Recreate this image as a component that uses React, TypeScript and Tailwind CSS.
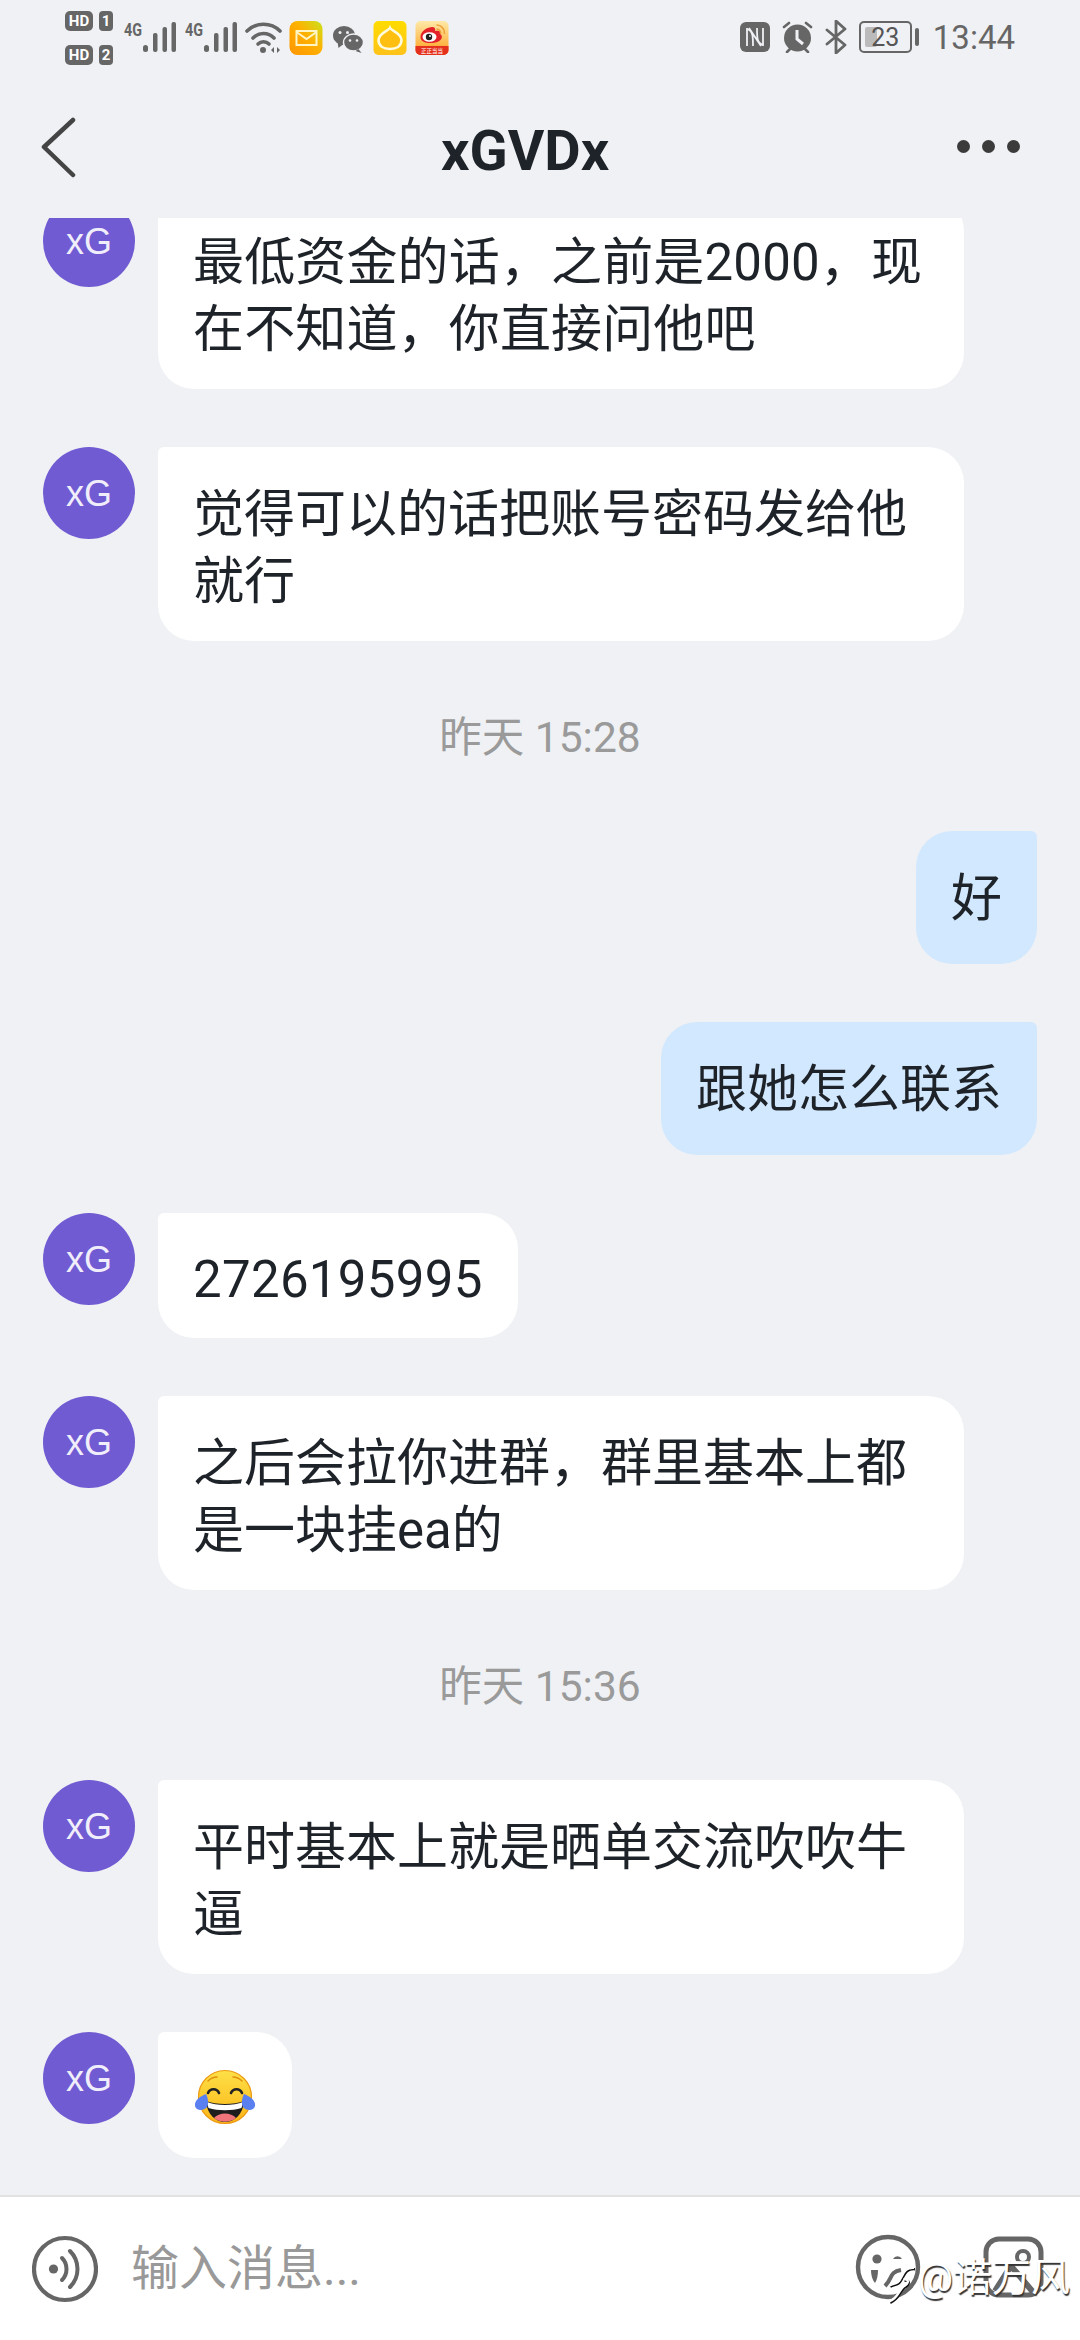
import React from "react";

const fontStack = { fontFamily: 'Roboto, "Noto Sans CJK SC", sans-serif' };

function Avatar() {
  return (
    <div className="w-[92px] h-[92px] shrink-0 rounded-full bg-[#705bd2] flex items-center justify-center pt-[2px] text-[36px] text-[#f1eefb] font-['Liberation_Sans',sans-serif]">
      xG
    </div>
  );
}

function Left({ children, cls }: { children: React.ReactNode; cls: string }) {
  return (
    <div className="flex items-start pl-[43px] gap-[23px]">
      <Avatar />
      <div className={`bg-white rounded-[36px] rounded-tl-[6px] px-[35px] text-[51px] leading-[67px] text-[#1e2329] ${cls}`}>{children}</div>
    </div>
  );
}

function Right({ children }: { children: React.ReactNode }) {
  return (
    <div className="flex justify-end pr-[43px]">
      <div className="bg-[#d2e8fe] rounded-[36px] rounded-tr-[6px] px-[35px] pt-[34px] pb-[32px] text-[51px] leading-[67px] text-[#1e2329]">{children}</div>
    </div>
  );
}

function Time({ children }: { children: React.ReactNode }) {
  return <div className="h-[74px] flex items-center justify-center text-[42.5px] text-[#9a9a9a] pt-[4px]">{children}</div>;
}

function Signal() {
  return (
    <svg width="52" height="34" viewBox="0 0 52 34" className="shrink-0">
      <text x="0" y="15" fontSize="19" fontWeight="700" fill="#666" fontFamily="Roboto" textLength="18" lengthAdjust="spacingAndGlyphs">4G</text>
      <g fill="#666">
        <rect x="19" y="24" width="5" height="7" rx="2.5" />
        <rect x="29" y="12" width="4.5" height="19" rx="2" />
        <rect x="38.5" y="6" width="4.5" height="25" rx="2" />
        <rect x="47.5" y="1" width="4.5" height="30" rx="2" />
      </g>
    </svg>
  );
}

function StatusBar() {
  return (
    <div className="h-[66px] flex items-center pl-[65px] pr-[65px] text-[#666]">
      <div className="w-[48px] shrink-0 flex flex-col gap-[14px] text-white font-bold font-['Roboto',sans-serif] mt-[10px]">
        <div className="flex justify-between h-[20px]">
          <span className="w-[28px] rounded-[5px] bg-[#666] text-[15px] leading-[20px] text-center">HD</span>
          <span className="w-[14px] rounded-[4px] bg-[#666] text-[15px] leading-[20px] text-center">1</span>
        </div>
        <div className="flex justify-between h-[20px]">
          <span className="w-[28px] rounded-[5px] bg-[#666] text-[15px] leading-[20px] text-center">HD</span>
          <span className="w-[14px] rounded-[4px] bg-[#666] text-[15px] leading-[20px] text-center">2</span>
        </div>
      </div>
      <div className="flex items-center ml-[11px] gap-[9px] mt-[10px]">
        <Signal />
        <Signal />
      </div>
      <svg width="38" height="34" viewBox="0 0 38 34" className="ml-[8px] mt-[10px] shrink-0">
        <g fill="none" stroke="#666" strokeWidth="3.6" strokeLinecap="round">
          <path d="M2 10 C11 1 26 1 35 10" />
          <path d="M8 17 C14 11 23 11 29 17" />
          <path d="M13 23 C16 20 21 20 24 23" />
        </g>
        <circle cx="18" cy="29" r="3" fill="#666" />
        <path d="M26 29l3-3v6zM32 26l3 3-3 3z" fill="#666" />
      </svg>
      <svg width="34" height="34" viewBox="0 0 33 34" className="ml-[6px] mt-[10px] shrink-0">
        <defs>
          <linearGradient id="mailg" x1="0" y1="1" x2="1" y2="0">
            <stop offset="0" stopColor="#ff9500" />
            <stop offset="0.55" stopColor="#ffb000" />
            <stop offset="1" stopColor="#c9e31d" />
          </linearGradient>
        </defs>
        <rect width="33" height="34" rx="8" fill="url(#mailg)" />
        <rect x="7" y="10" width="20" height="14" fill="none" stroke="#fff6c8" strokeWidth="2" />
        <path d="M7 11l10 7 10-7" fill="none" stroke="#fff6c8" strokeWidth="2" />
      </svg>
      <svg width="32" height="28" viewBox="0 0 31 28" className="ml-[9px] mt-[11px] shrink-0">
        <ellipse cx="11.5" cy="10.5" rx="11" ry="9.5" fill="#666" />
        <path d="M5 17l1 6 5-4z" fill="#666" />
        <ellipse cx="21" cy="17.5" rx="10" ry="8.5" stroke="#eff1f4" strokeWidth="1.4" fill="#666" />
        <path d="M26 24l3 4-6-2z" fill="#666" />
        <circle cx="7.5" cy="7.5" r="1.5" fill="#eff1f4" />
        <circle cx="15" cy="7.5" r="1.5" fill="#eff1f4" />
        <circle cx="17.5" cy="15.5" r="1.3" fill="#eff1f4" />
        <circle cx="24.5" cy="15.5" r="1.3" fill="#eff1f4" />
      </svg>
      <svg width="34" height="34" viewBox="0 0 33 34" className="ml-[9px] mt-[10px] shrink-0">
        <defs>
          <linearGradient id="yelg" x1="0" y1="0" x2="0" y2="1">
            <stop offset="0" stopColor="#ffdc00" />
            <stop offset="1" stopColor="#ffc21a" />
          </linearGradient>
        </defs>
        <rect width="33" height="34" rx="5" fill="url(#yelg)" />
        <path d="M16.5 7 C18 10 28 12 28 19 C28 25 23 28 16.5 28 C10 28 5 25 5 19 C5 12 15 10 16.5 7 Z" fill="#ffbf10" stroke="#fffbe0" strokeWidth="2.6" />
      </svg>
      <svg width="34" height="34" viewBox="0 0 33 34" className="ml-[8px] mt-[10px] shrink-0">
        <defs>
          <linearGradient id="wbg" x1="0" y1="0" x2="0" y2="1">
            <stop offset="0" stopColor="#ffe9a8" />
            <stop offset="0.7" stopColor="#ffb545" />
            <stop offset="1" stopColor="#f0501e" />
          </linearGradient>
        </defs>
        <rect width="33" height="34" rx="5" fill="url(#wbg)" />
        <path d="M0 25h33v4a5 5 0 0 1-5 5H5a5 5 0 0 1-5-5z" fill="#e5301c" />
        <path d="M5 16 C5 10 12 6 17 6 C20 6 20 9 19.5 10 C23 9 26 10 25 13.5 C28 15 27 22 15 22 C9 22 5 20 5 16 Z" fill="#e3222a" />
        <ellipse cx="14" cy="16" rx="7" ry="4.8" fill="#fff" />
        <circle cx="13.5" cy="16" r="3.2" fill="#222" />
        <circle cx="14.5" cy="15" r="1" fill="#fff" />
        <path d="M21 4a8 8 0 0 1 8 9M21 8a4 4 0 0 1 4 5" fill="none" stroke="#eda13b" strokeWidth="1.6" />
        <text x="16.5" y="32" textAnchor="middle" fontSize="5.5" fill="#fff" fontFamily="Noto Sans CJK SC">正正当当</text>
      </svg>

      <div className="ml-auto flex items-center mt-[8px]">
        <svg width="30" height="30" viewBox="0 0 30 30" className="shrink-0">
          <rect width="30" height="30" rx="6" fill="#666" />
          <path d="M7 6 V24 M7 7 C13 9 13 14 13 24 M23 24 V6 M23 23 C17 21 17 16 17 6 M9 6 L21 24" fill="none" stroke="#eff1f4" strokeWidth="1.8" />
        </svg>
        <svg width="33" height="32" viewBox="0 0 33 32" className="ml-[11px] shrink-0">
          <circle cx="16.5" cy="17" r="13.5" fill="#666" />
          <path d="M3 6l5-4M30 6l-5-4M6 31l3-3M27 31l-3-3" stroke="#666" strokeWidth="2.6" strokeLinecap="round" />
          <path d="M16 9v9l6 5" fill="none" stroke="#eff1f4" strokeWidth="3" />
        </svg>
        <svg width="22" height="34" viewBox="0 0 22 34" className="ml-[11px] shrink-0">
          <path d="M2 24 L20 9 L11 1 V33 L20 25 L2 10" fill="none" stroke="#666" strokeWidth="2.8" strokeLinejoin="round" strokeLinecap="round" />
        </svg>
        <div className="ml-[12px] relative w-[53px] h-[32px] rounded-[5px] border-[2.5px] border-[#666] shrink-0 flex items-center justify-center text-[25px] leading-none text-[#555]">
          <div className="absolute left-[4px] top-[4px] bottom-[4px] w-[12px] rounded-[2px] bg-[#bbbbbb]" />
          <span className="relative">23</span>
        </div>
        <div className="ml-[3px] w-[4px] h-[18px] rounded-[2px] bg-[#666] shrink-0" />
        <div className="ml-[14px] text-[33px] leading-none text-[#666]">13:44</div>
      </div>
    </div>
  );
}

function Emoji() {
  return (
    <svg width="62" height="56" viewBox="0 0 62 56">
      <defs>
        <linearGradient id="emf" x1="0" y1="0" x2="0" y2="1">
          <stop offset="0" stopColor="#fde047" />
          <stop offset="1" stopColor="#fbb516" />
        </linearGradient>
      </defs>
      <circle cx="31" cy="28" r="26.5" fill="url(#emf)" stroke="#ec9a12" strokeWidth="1.2" />
      <path d="M14 12c3-3 6-4 9-4M48 12c-3-3-6-4-9-4" fill="none" stroke="#e2900f" strokeWidth="1.6" strokeLinecap="round" />
      <path d="M14 24c2-5 9-5 11 0M37 24c2-5 9-5 11 0" fill="none" stroke="#222" strokeWidth="2.6" strokeLinecap="round" />
      <path d="M12 32 C22 36 40 36 50 32 C49 46 40 53 31 53 C22 53 13 46 12 32 Z" fill="#1d1d1d" />
      <path d="M13 33 C22 37 40 37 49 33 L47.5 39 C38 42 24 42 14.5 39 Z" fill="#fff" />
      <path d="M20 49 C25 43 37 43 42 49 C36 54 26 54 20 49 Z" fill="#f0757a" />
      <path d="M12 25 C7 27 0 31 1 37 C2 42 10 42 13 38 C15 35 14 29 12 25 Z" fill="#5a7ff0" />
      <path d="M50 25 C55 27 62 31 61 37 C60 42 52 42 49 38 C47 35 48 29 50 25 Z" fill="#5a7ff0" />
    </svg>
  );
}

export default function App() {
  return (
    <div lang="zh-CN" style={fontStack} className="relative w-[1080px] h-[2340px] bg-[#eff1f4] flex flex-col overflow-hidden">
      <StatusBar />
      <div className="h-[152px] shrink-0 flex items-start pl-[41px] pr-[60px]">
        <svg width="36" height="62" viewBox="0 0 36 62" className="mt-[51px] shrink-0">
          <path d="M32 3 L3 30 L32 58" fill="none" stroke="#444" strokeWidth="4.5" strokeLinecap="round" strokeLinejoin="round" />
        </svg>
        <div className="ml-[364px] mt-[55px] text-[56px] leading-[60px] font-bold text-[#1e2329]">xGVDx</div>
        <div className="ml-auto mt-[74px] flex items-center gap-[12px]">
          <span className="w-[13px] h-[13px] rounded-full bg-[#3b3b3b]" />
          <span className="w-[13px] h-[13px] rounded-full bg-[#3b3b3b]" />
          <span className="w-[13px] h-[13px] rounded-full bg-[#3b3b3b]" />
        </div>
      </div>

      <div className="flex-1 overflow-hidden">
        <div className="-mt-[23px] flex flex-col gap-[58px]">
          <Left cls="w-[806px] pt-[34px] pb-[26px] tracking-[0.15px]">最低资金的话，之前是2000，现在不知道，你直接问他吧</Left>
          <Left cls="w-[806px] pt-[34px] pb-[26px]">觉得可以的话把账号密码发给他就行</Left>
          <Time>昨天 15:28</Time>
          <Right>好</Right>
          <Right>跟她怎么联系</Right>
          <Left cls="pt-[33px] pb-[25px] tracking-[0.3px]">2726195995</Left>
          <Left cls="w-[806px] pt-[34px] pb-[26px]">之后会拉你进群，群里基本上都是一块挂ea的</Left>
          <Time>昨天 15:36</Time>
          <Left cls="w-[806px] pt-[34px] pb-[26px]">平时基本上就是晒单交流吹吹牛逼</Left>
          <Left cls="w-[134px] h-[126px] !px-0 pt-[4px] flex items-center justify-center"><Emoji /></Left>
        </div>
      </div>

      <div className="h-[145px] shrink-0 bg-white border-t-[2px] border-[#e2e2e2] flex items-center pl-[32px] pr-[35px]">
        <svg width="66" height="68" viewBox="0 0 66 68" className="shrink-0">
          <circle cx="33" cy="34" r="31" fill="none" stroke="#666" strokeWidth="4.2" />
          <circle cx="21.5" cy="34" r="4.6" fill="#666" />
          <path d="M30 23 C36 29 36 39 30 45" fill="none" stroke="#666" strokeWidth="4" strokeLinecap="round" />
          <path d="M38 16 C48 26 48 42 38 52" fill="none" stroke="#666" strokeWidth="4" strokeLinecap="round" />
        </svg>
        <div className="ml-[33px] text-[48px] leading-none text-[#999]">输入消息...</div>
        <svg width="66" height="66" viewBox="0 0 66 66" className="ml-auto -mt-[4px] shrink-0">
          <circle cx="33" cy="33" r="30" fill="none" stroke="#666" strokeWidth="4.4" />
          <circle cx="22" cy="25" r="4.6" fill="#666" />
          <path d="M38 25a5 5 0 0 1 9 0z" fill="#666" />
          <path d="M16 36c0 6 2 11 4 13 2-3 3-8 3-13z" fill="#666" />
          <path d="M30 52C38 44 34 38 46 36" fill="none" stroke="#666" strokeWidth="4" />
        </svg>
        <svg width="62" height="62" viewBox="0 0 62 62" className="ml-[62px] -mt-[4px] shrink-0">
          <rect x="3" y="3" width="55" height="56" rx="13" fill="none" stroke="#666" strokeWidth="5" />
          <circle cx="40" cy="21" r="6" fill="none" stroke="#666" strokeWidth="4" />
          <path d="M12 55 L28 30 L50 56" fill="none" stroke="#666" strokeWidth="6" />
        </svg>
      </div>

      <div className="absolute left-[885px] top-[2257px] flex items-center">
        <svg width="30" height="50" viewBox="0 0 34 54" className="shrink-0">
          <g fill="none" strokeWidth="2.8">
            <path d="M33 11 C22 10 21 18 17 24 C14 30 9 28 5 31 M21 24 C27 23 28 28 21 32 C15 37 15 45 5 49" stroke="#111" transform="translate(1 1.5)" />
            <path d="M33 11 C22 10 21 18 17 24 C14 30 9 28 5 31 M21 24 C27 23 28 28 21 32 C15 37 15 45 5 49" stroke="#fff" />
          </g>
        </svg>
        <div className="text-[39px] leading-none text-white [text-shadow:1px_1.5px_1px_#333] ml-[3px] -mt-[8px]">@诺万风</div>
      </div>
    </div>
  );
}
